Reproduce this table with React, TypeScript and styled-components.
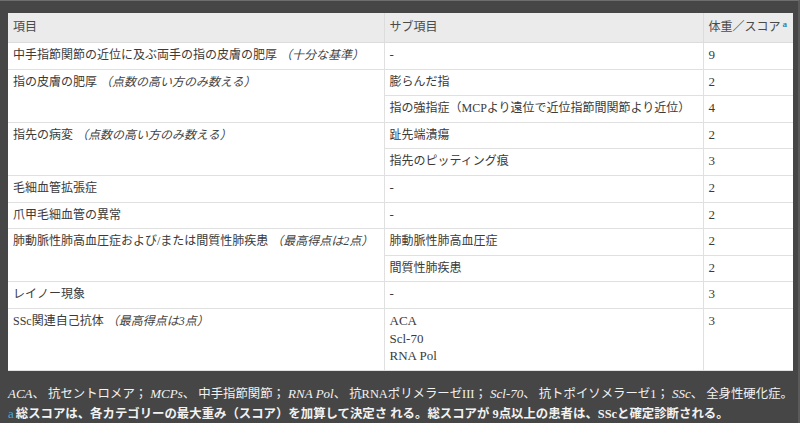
import styled, { createGlobalStyle } from 'styled-components'

const Global = createGlobalStyle`
  html, body {
    margin: 0;
    padding: 0;
    background: #fff;
  }
`

const serif = `"Liberation Serif", "Noto Sans CJK JP", serif`

const Frame = styled.div`
  width: 800px;
  height: 423px;
  box-sizing: border-box;
  background: #464646;
  border-top: 1px solid #6e6e6e;
  border-right: 2px solid #5a5a5a;
  padding: 12px 5px 0 8px;
  overflow: hidden;
  font-family: ${serif};
`

const Table = styled.table`
  width: 785px;
  border-collapse: collapse;
  table-layout: fixed;
  background: #fff;
  color: #3a3a3a;
  font-size: 12px;
`

const Th = styled.th`
  background: #ebebeb;
  color: #4a4a4a;
  font-weight: normal;
  text-align: left;
  padding: 5px 5px 6px;
  line-height: 18px;
  border: 1px solid #dcdcdc;
  border-top: none;
  white-space: nowrap;

  &:first-child { border-left: none; }
  &:last-child { border-right: none; }
`

const Td = styled.td`
  vertical-align: top;
  padding: 4px 5px;
  line-height: 17.6px;
  border: 1px solid #e0e0e0;
  white-space: nowrap;

  &:first-child { border-left: none; }
  &:last-child { border-right: none; }
`

const Latin = styled.span`
  font-size: 13px;
  line-height: 1;
`

const Note = styled.i`
  font-style: italic;
  color: #444;
`

const Sup = styled.sup`
  color: #2f86b3;
  font-size: 9px;
  font-weight: bold;
  line-height: 1;
  vertical-align: 4px;
  margin-left: 2px;
`

const Footer = styled.div`
  padding-top: 13px;
  color: #f2f2f2;
  font-size: 12.4px;
  line-height: 20px;
`

const Line = styled.div<{ $bold?: boolean }>`
  height: 20px;
  white-space: nowrap;
  font-weight: ${({ $bold }) => ($bold ? 'bold' : 'normal')};
`

const Abbr = styled.i`
  font-style: italic;
  font-size: 13px;
  line-height: 1;
`

const Mark = styled.span`
  color: #44a8dc;
  font-weight: normal;
  font-size: 13px;
  line-height: 1;
  margin-right: 2px;
`

type Row = {
  item?: { text: string; note?: string; span?: number }
  sub: string[]
  score: string
}

const rows: Row[] = [
  { item: { text: '中手指節関節の近位に及ぶ両手の指の皮膚の肥厚', note: '（十分な基準）' }, sub: ['-'], score: '9' },
  { item: { text: '指の皮膚の肥厚', note: '（点数の高い方のみ数える）', span: 2 }, sub: ['膨らんだ指'], score: '2' },
  { sub: ['指の強指症（MCPより遠位で近位指節間関節より近位）'], score: '4' },
  { item: { text: '指先の病変', note: '（点数の高い方のみ数える）', span: 2 }, sub: ['趾先端潰瘍'], score: '2' },
  { sub: ['指先のピッティング痕'], score: '3' },
  { item: { text: '毛細血管拡張症' }, sub: ['-'], score: '2' },
  { item: { text: '爪甲毛細血管の異常' }, sub: ['-'], score: '2' },
  { item: { text: '肺動脈性肺高血圧症および/または間質性肺疾患', note: '（最高得点は2点）', span: 2 }, sub: ['肺動脈性肺高血圧症'], score: '2' },
  { sub: ['間質性肺疾患'], score: '2' },
  { item: { text: 'レイノー現象' }, sub: ['-'], score: '3' },
  { item: { text: 'SSc関連自己抗体', note: '（最高得点は3点）' }, sub: ['ACA', 'Scl-70', 'RNA Pol'], score: '3' },
]

const isLatin = (s: string) => /^[A-Za-z0-9 \-]+$/.test(s)

export default function App() {
  return (
    <>
      <Global />
      <Frame>
        <Table>
          <colgroup>
            <col style={{ width: 376 }} />
            <col style={{ width: 319 }} />
            <col style={{ width: 90 }} />
          </colgroup>
          <thead>
            <tr>
              <Th>項目</Th>
              <Th>サブ項目</Th>
              <Th>体重／スコア<Sup>a</Sup></Th>
            </tr>
          </thead>
          <tbody>
            {rows.map((r, i) => (
              <tr key={i}>
                {r.item && (
                  <Td rowSpan={r.item.span ?? 1}>
                    {r.item.text}
                    {r.item.note && <> <Note>{r.item.note}</Note></>}
                  </Td>
                )}
                <Td>
                  {r.sub.map((s, j) => (
                    <div key={j}>{isLatin(s) ? <Latin>{s}</Latin> : s}</div>
                  ))}
                </Td>
                <Td><Latin>{r.score}</Latin></Td>
              </tr>
            ))}
          </tbody>
        </Table>
        <Footer>
          <Line>
            <Abbr>ACA</Abbr>、 抗セントロメア； <Abbr>MCPs</Abbr>、 中手指節関節； <Abbr>RNA Pol</Abbr>、 抗RNAポリメラーゼIII； <Abbr>Scl-70</Abbr>、 抗トポイソメラーゼ1； <Abbr>SSc</Abbr>、 全身性硬化症。
          </Line>
          <Line $bold>
            <Mark>a</Mark>総スコアは、各カテゴリーの最大重み（スコア）を加算して決定さ れる。総スコアが 9点以上の患者は、SScと確定診断される。
          </Line>
        </Footer>
      </Frame>
    </>
  )
}
